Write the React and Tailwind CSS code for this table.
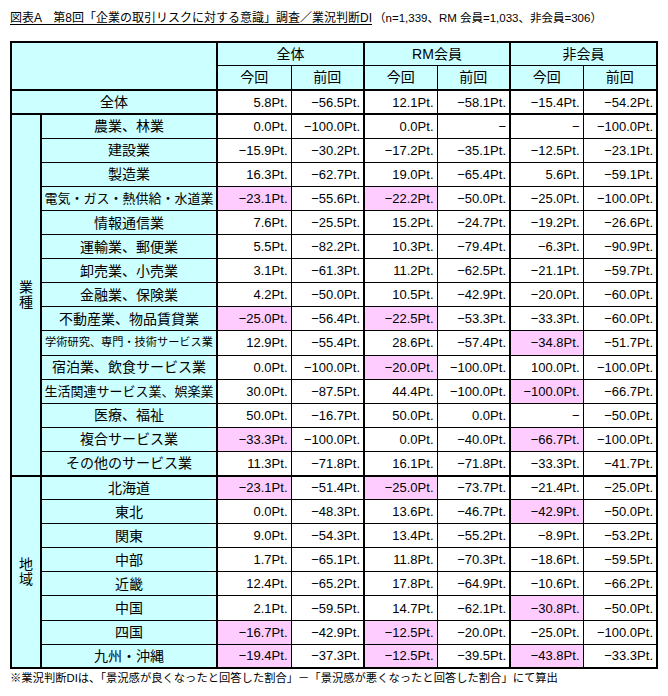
import React from 'react';

const PINK = 'bg-[#ffccff]';
const CYAN = 'bg-[#ccffff]';

// [label, 全体今回, 全体前回, RM今回, RM前回, 非今回, 非前回, pink flags (今回 columns), label size]
const industry = [
  ['農業、林業', '0.0', '-100.0', '0.0', '-', '-', '-100.0', []],
  ['建設業', '-15.9', '-30.2', '-17.2', '-35.1', '-12.5', '-23.1', []],
  ['製造業', '16.3', '-62.7', '19.0', '-65.4', '5.6', '-59.1', []],
  ['電気・ガス・熱供給・水道業', '-23.1', '-55.6', '-22.2', '-50.0', '-25.0', '-100.0', [0, 2], 'sm'],
  ['情報通信業', '7.6', '-25.5', '15.2', '-24.7', '-19.2', '-26.6', []],
  ['運輸業、郵便業', '5.5', '-82.2', '10.3', '-79.4', '-6.3', '-90.9', []],
  ['卸売業、小売業', '3.1', '-61.3', '11.2', '-62.5', '-21.1', '-59.7', []],
  ['金融業、保険業', '4.2', '-50.0', '10.5', '-42.9', '-20.0', '-60.0', []],
  ['不動産業、物品賃貸業', '-25.0', '-56.4', '-22.5', '-53.3', '-33.3', '-60.0', [0, 2]],
  ['学術研究、専門・技術サービス業', '12.9', '-55.4', '28.6', '-57.4', '-34.8', '-51.7', [4], 'xs'],
  ['宿泊業、飲食サービス業', '0.0', '-100.0', '-20.0', '-100.0', '100.0', '-100.0', [2]],
  ['生活関連サービス業、娯楽業', '30.0', '-87.5', '44.4', '-100.0', '-100.0', '-66.7', [4], 'sm'],
  ['医療、福祉', '50.0', '-16.7', '50.0', '0.0', '-', '-50.0', []],
  ['複合サービス業', '-33.3', '-100.0', '0.0', '-40.0', '-66.7', '-100.0', [0, 4]],
  ['その他のサービス業', '11.3', '-71.8', '16.1', '-71.8', '-33.3', '-41.7', []],
];

const region = [
  ['北海道', '-23.1', '-51.4', '-25.0', '-73.7', '-21.4', '-25.0', [0, 2]],
  ['東北', '0.0', '-48.3', '13.6', '-46.7', '-42.9', '-50.0', [4]],
  ['関東', '9.0', '-54.3', '13.4', '-55.2', '-8.9', '-53.2', []],
  ['中部', '1.7', '-65.1', '11.8', '-70.3', '-18.6', '-59.5', []],
  ['近畿', '12.4', '-65.2', '17.8', '-64.9', '-10.6', '-66.2', []],
  ['中国', '2.1', '-59.5', '14.7', '-62.1', '-30.8', '-50.0', [4]],
  ['四国', '-16.7', '-42.9', '-12.5', '-20.0', '-25.0', '-100.0', [0, 2]],
  ['九州・沖縄', '-19.4', '-37.3', '-12.5', '-39.5', '-43.8', '-33.3', [0, 2, 4]],
];

function fmt(v) {
  if (v === '-') return '−';
  return v.replace('-', '−') + 'Pt.';
}

function ValueCells({ row, bottom }) {
  const pink = row[7] || [];
  return row.slice(1, 7).map((v, i) => {
    const groupStart = i % 2 === 0;
    return (
      <td
        key={i}
        className={`border border-black text-right pr-[3px] text-[13px] leading-none ${
          groupStart ? 'border-l-2' : ''
        } ${i === 5 ? 'border-r-2' : ''} ${bottom ? 'border-b-2' : ''} ${
          pink.includes(i) ? PINK : 'bg-white'
        }`}
      >
        {fmt(v)}
      </td>
    );
  });
}

function labelSize(s) {
  if (s === 'sm') return 'text-[13px]';
  if (s === 'xs') return 'text-[11.2px]';
  return 'text-[14px]';
}

export default function App() {
  return (
    <div
      className="w-[668px] h-[696px] bg-white text-black pl-[10px]"
      style={{ fontFamily: '"Liberation Sans", "Noto Sans CJK JP", sans-serif' }}
    >
      <div className="h-[41px] pt-[11px] text-[12px] leading-[14px] whitespace-nowrap">
        <span className="underline underline-offset-[2px]">
          図表A　第8回「企業の取引リスクに対する意識」調査／業況判断DI
        </span>
        <span className="text-[11.5px] ml-[2px]">（n=1,339、RM 会員=1,033、非会員=306）</span>
      </div>

      <table className="table-fixed border-collapse w-[646px]">
        <colgroup>
          <col className="w-[30px]" />
          <col className="w-[176px]" />
          <col className="w-[74px]" />
          <col className="w-[73px]" />
          <col className="w-[73px]" />
          <col className="w-[73px]" />
          <col className="w-[73px]" />
          <col className="w-[74px]" />
        </colgroup>
        <thead>
          <tr className="h-[23px]">
            <th colSpan={2} rowSpan={2} className={`border-2 border-black ${CYAN}`} />
            {['全体', 'RM会員', '非会員'].map((g, i) => (
              <th
                key={g}
                colSpan={2}
                className={`border border-black border-t-2 border-l-2 ${i === 2 ? 'border-r-2' : ''} ${CYAN} text-[14px] font-normal leading-none`}
              >
                {g}
              </th>
            ))}
          </tr>
          <tr className="h-[25px]">
            {[0, 1, 2, 3, 4, 5].map(i => (
              <th
                key={i}
                className={`border border-black border-b-2 ${i % 2 === 0 ? 'border-l-2' : ''} ${
                  i === 5 ? 'border-r-2' : ''
                } ${CYAN} text-[14px] font-normal leading-none`}
              >
                {i % 2 === 0 ? '今回' : '前回'}
              </th>
            ))}
          </tr>
        </thead>
        <tbody>
          <tr className="h-[24.1px]">
            <td colSpan={2} className={`border-2 border-black ${CYAN} text-center text-[14px] leading-none`}>
              全体
            </td>
            <ValueCells row={['全体', '5.8', '-56.5', '12.1', '-58.1', '-15.4', '-54.2', []]} bottom />
          </tr>
          {industry.map((r, idx) => (
            <tr key={r[0]} className="h-[24.1px]">
              {idx === 0 && (
                <td
                  rowSpan={industry.length}
                  className={`border-2 border-black ${CYAN} text-center text-[14px] leading-[15px]`}
                >
                  業<br />種
                </td>
              )}
              <td
                className={`border border-black border-l-2 ${idx === industry.length - 1 ? 'border-b-2' : ''} ${CYAN} text-center whitespace-nowrap leading-none ${labelSize(r[8])}`}
              >
                {r[0]}
              </td>
              <ValueCells row={r} bottom={idx === industry.length - 1} />
            </tr>
          ))}
          {region.map((r, idx) => (
            <tr key={r[0]} className="h-[24.1px]">
              {idx === 0 && (
                <td
                  rowSpan={region.length}
                  className={`border-2 border-black ${CYAN} text-center text-[14px] leading-[15px]`}
                >
                  地<br />域
                </td>
              )}
              <td
                className={`border border-black border-l-2 ${idx === region.length - 1 ? 'border-b-2' : ''} ${CYAN} text-center text-[14px] leading-none`}
              >
                {r[0]}
              </td>
              <ValueCells row={r} bottom={idx === region.length - 1} />
            </tr>
          ))}
        </tbody>
      </table>

      <div className="text-[11.3px] leading-[14px] pt-[2px] whitespace-nowrap">
        ※業況判断DIは、「景況感が良くなったと回答した割合」－「景況感が悪くなったと回答した割合」にて算出
      </div>
    </div>
  );
}
